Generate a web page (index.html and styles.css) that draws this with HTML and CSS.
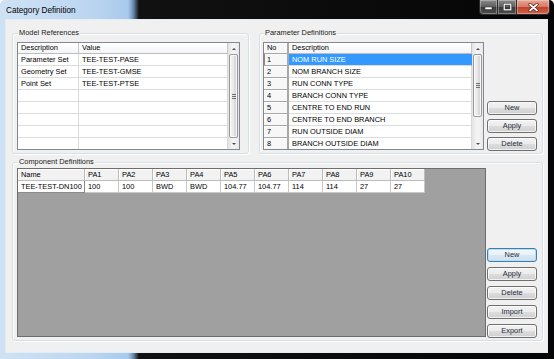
FILE: index.html
```html
<!DOCTYPE html>
<html lang="en">
<head>
    <meta charset="UTF-8">
    <title>Category Definition</title>
    <link rel="stylesheet" href="styles.css">
</head>
<body>
<div class="window">
    <div class="titlebar">
        <span class="title">Category Definition</span>
        <div class="caption-buttons">
            <span class="cb min"><svg width="9" height="6" viewBox="0 0 9 6"><rect x="1" y="3" width="7" height="2.5" fill="#fff" stroke="#333" stroke-width="0.6"/></svg></span>
            <span class="cb max"><svg width="9" height="8" viewBox="0 0 9 8"><rect x="1.2" y="1.2" width="6.6" height="5.6" fill="none" stroke="#333" stroke-width="2.2"/><rect x="1.2" y="1.2" width="6.6" height="5.6" fill="none" stroke="#fff" stroke-width="1.2"/></svg></span>
            <span class="cb close"><svg width="11" height="9" viewBox="0 0 11 9"><path d="M2 1.5 L9 7.5 M9 1.5 L2 7.5" stroke="#5a1a10" stroke-width="3.2" stroke-linecap="round"/><path d="M2 1.5 L9 7.5 M9 1.5 L2 7.5" stroke="#fff" stroke-width="1.8" stroke-linecap="round"/></svg></span>
        </div>
    </div>

    <div class="client">
        <div class="top-row">
            <!-- 模型引用 -->
            <div class="group model">
                <div class="group-label">Model References</div>
                <div class="grid">
                    <table>
                        <colgroup><col class="c-mdesc"><col></colgroup>
                        <thead>
                            <tr><th>Description</th><th>Value</th></tr>
                        </thead>
                        <tbody>
                            <tr><td>Parameter Set</td><td>TEE-TEST-PASE</td></tr>
                            <tr><td>Geometry Set</td><td>TEE-TEST-GMSE</td></tr>
                            <tr><td>Point Set</td><td>TEE-TEST-PTSE</td></tr>
                            <tr><td>&nbsp;</td><td>&nbsp;</td></tr>
                            <tr><td>&nbsp;</td><td>&nbsp;</td></tr>
                            <tr><td>&nbsp;</td><td>&nbsp;</td></tr>
                            <tr><td>&nbsp;</td><td>&nbsp;</td></tr>
                            <tr><td>&nbsp;</td><td>&nbsp;</td></tr>
                        </tbody>
                    </table>
                    <div class="vscroll">
                        <div class="arrow"><span class="tri up"></span></div>
                        <div class="track"><div class="thumb full"><span class="grip"></span></div></div>
                        <div class="arrow"><span class="tri down"></span></div>
                    </div>
                </div>
            </div>

            <!-- 参数定义 -->
            <div class="group params">
                <div class="group-label">Parameter Definitions</div>
                <div class="group-body">
                    <div class="grid">
                        <table>
                            <colgroup><col class="c-no"><col></colgroup>
                            <thead>
                                <tr><th class="no">No</th><th>Description</th></tr>
                            </thead>
                            <tbody>
                                <tr><td class="no current">1</td><td class="selected">NOM RUN SIZE</td></tr>
                                <tr><td class="no">2</td><td>NOM BRANCH SIZE</td></tr>
                                <tr><td class="no">3</td><td>RUN CONN TYPE</td></tr>
                                <tr><td class="no">4</td><td>BRANCH CONN TYPE</td></tr>
                                <tr><td class="no">5</td><td>CENTRE TO END RUN</td></tr>
                                <tr><td class="no">6</td><td>CENTRE TO END BRANCH</td></tr>
                                <tr><td class="no">7</td><td>RUN OUTSIDE DIAM</td></tr>
                                <tr><td class="no">8</td><td>BRANCH OUTSIDE DIAM</td></tr>
                            </tbody>
                        </table>
                        <div class="vscroll">
                            <div class="arrow"><span class="tri up"></span></div>
                            <div class="track"><div class="thumb part"><span class="grip"></span></div></div>
                            <div class="arrow"><span class="tri down"></span></div>
                        </div>
                    </div>
                    <div class="buttons">
                        <button class="btn">New</button>
                        <button class="btn">Apply</button>
                        <button class="btn">Delete</button>
                    </div>
                </div>
            </div>
        </div>

        <!-- 组件定义 -->
        <div class="group components">
            <div class="group-label">Component Definitions</div>
            <div class="group-body">
                <div class="grid workspace">
                    <table class="comp">
                        <colgroup><col class="c-name"><col class="c-pa"><col class="c-pa"><col class="c-pa"><col class="c-pa"><col class="c-pa"><col class="c-pa"><col class="c-pa"><col class="c-pa"><col class="c-pa"><col class="c-pa"></colgroup>
                        <thead>
                            <tr><th>Name</th><th>PA1</th><th>PA2</th><th>PA3</th><th>PA4</th><th>PA5</th><th>PA6</th><th>PA7</th><th>PA8</th><th>PA9</th><th>PA10</th></tr>
                        </thead>
                        <tbody>
                            <tr><td class="focus">TEE-TEST-DN100</td><td>100</td><td>100</td><td>BWD</td><td>BWD</td><td>104.77</td><td>104.77</td><td>114</td><td>114</td><td>27</td><td>27</td></tr>
                        </tbody>
                    </table>
                </div>
                <div class="buttons wide">
                    <button class="btn default">New</button>
                    <button class="btn">Apply</button>
                    <button class="btn">Delete</button>
                    <button class="btn">Import</button>
                    <button class="btn">Export</button>
                </div>
            </div>
        </div>
    </div>
</div>
</body>
</html>
```

FILE: styles.css
```css
/* 全局 */
body {
    margin: 0;
    font-family: "Liberation Sans", Arial, sans-serif;
    font-size: 7.4px;
    color: #000;
}

/* 窗口外框 (Aero) */
.window {
    width: 554px;
    height: 359px;
    box-sizing: border-box;
    padding: 0 6px 6px 5px;
    display: flex;
    flex-direction: column;
    background: linear-gradient(to right, #cfe2f5 0, #bcd6f0 90px, #a8caed 128px, #6d8fb3 133px, #111 139px, #050505 100%);
    border-radius: 5px 5px 0 0;
}

.titlebar {
    height: 19px;
    flex: none;
    display: flex;
    justify-content: space-between;
    align-items: flex-start;
}
.title {
    font-size: 8.2px;
    line-height: 9px;
    margin: 6px 0 0 1px;
    color: #000;
}

/* 标题栏按钮 */
.caption-buttons {
    display: flex;
    margin-right: -2px;
}
.cb {
    height: 15px;
    box-sizing: border-box;
    border: 1px solid #2a2a2a;
    border-top: none;
    border-left: none;
    display: flex;
    align-items: center;
    justify-content: center;
    box-shadow: inset 0 0 0 1px rgba(255,255,255,0.3);
}
.cb.min {
    width: 19px;
    border-left: 1px solid #2a2a2a;
    border-radius: 0 0 0 4px;
    background: linear-gradient(#8a8a8a, #5c5c5c 50%, #3a3a3a 50%, #4d4d4d);
}
.cb.max {
    width: 19px;
    background: linear-gradient(#8a8a8a, #5c5c5c 50%, #3a3a3a 50%, #4d4d4d);
}
.cb.close {
    width: 33px;
    border-radius: 0 0 4px 0;
    background: linear-gradient(#e8a493, #d47a66 50%, #c1402a 50%, #d0644c);
}

/* 客户区 */
.client {
    flex: 1;
    background: #f0f0f0;
    border: 1px solid #e4ecf4;
    display: flex;
    flex-direction: column;
}

.top-row {
    display: flex;
    gap: 10px;
    padding: 13px 4px 0 6px;
}

/* 分组框 */
.group {
    border: 1px solid #d5dfe5;
    border-radius: 3px;
    box-shadow: inset 1px 1px #fff, 1px 1px #fff;
    padding: 0 4px 3px 4px;
    display: flex;
    flex-direction: column;
}
.group-label {
    align-self: flex-start;
    margin: -6px 0 0 1px;
    padding: 0 1px;
    line-height: 10px;
    background: #f0f0f0;
    color: #1a1a1a;
}
.group.model {
    width: 237px;
    box-sizing: border-box;
    padding-right: 8px;
}
.group.model .grid {
    margin-top: 4px;
}
.group.params {
    flex: 1;
    padding-left: 3px;
}
.group-body {
    display: flex;
    margin-top: 4px;
    flex: 1;
}
.group-body .grid {
    flex: 1;
}

.group.components {
    flex: 1;
    margin: 8px 4px 11px 6px;
}
.group.components .group-body {
    margin-top: 1px;
}

/* 按钮列 */
.buttons {
    width: 50px;
    margin: 0 1px 0 3px;
    display: flex;
    flex-direction: column;
    justify-content: flex-end;
    gap: 4px;
    margin-bottom: -1px;
}
.buttons.wide {
    gap: 5px;
    margin: 0 1px -1px 1px;
}
.btn {
    height: 14px;
    box-sizing: border-box;
    padding: 0;
    border: 1px solid #707070;
    border-radius: 3px;
    background: linear-gradient(#f2f2f2 0, #ebebeb 50%, #dddddd 50%, #cfcfcf 100%);
    box-shadow: inset 0 0 0 1px rgba(255,255,255,0.7);
    font-family: inherit;
    font-size: 7.4px;
    line-height: 12px;
    color: #1b2a3a;
}
.btn.default {
    border-color: #3c7fb1;
    background: linear-gradient(#f3f8fc 0, #e8f1f8 50%, #dbe7f1 50%, #d2e1ee 100%);
    box-shadow: inset 0 0 0 1px #b9dcf5;
}

/* 表格 */
.grid {
    height: 108px;
    box-sizing: border-box;
    border: 1px solid #828790;
    background: #fff;
    display: flex;
    overflow: hidden;
}
.grid table {
    flex: 1;
    align-self: flex-start;
    table-layout: fixed;
    border-collapse: separate;
    border-spacing: 0;
}
.grid th,
.grid td {
    box-sizing: border-box;
    padding: 0 0 0 3px;
    line-height: 11px;
    text-align: left;
    font-weight: normal;
    white-space: nowrap;
    overflow: hidden;
    border-right: 1px solid #d9d9d9;
    border-bottom: 1px solid #dcdcdc;
}
.grid th {
    line-height: 10px;
    background: linear-gradient(#fff, #f4f5f7);
    border-right: 1px solid #c9c9c9;
    border-bottom: 1px solid #bdbdbd;
}
.c-mdesc { width: 61px; }
.c-no { width: 25px; }
.c-name { width: 67px; }
.c-pa { width: 34px; }

.grid th.no,
.grid td.no {
    background: #f7f7f7;
    border-right: 2px solid #a8a8a8;
    border-bottom: 1px solid #a8a8a8;
    box-shadow: inset 1px 1px #fff;
}
.grid td.no.current {
    box-shadow: inset 1px 0 #888;
}
.grid td.selected {
    background: #3399ff;
    color: #fff;
    border-right-color: #3399ff;
}

/* 灰色工作区 */
.grid.workspace {
    height: auto;
    flex: 1;
    background: #a0a0a0;
    border-color: #6d6d6d;
}
.grid table.comp {
    flex: none;
}
.comp th {
    line-height: 11px;
    background: #f2f2f2;
    border-right: 1px solid #bcbcbc;
    border-bottom: 1px solid #bcbcbc;
    box-shadow: inset 1px 1px #fff;
}
.comp td {
    background: #fff;
    border-right: 1px solid #c8c8c8;
    border-bottom: 1px solid #c8c8c8;
}
.comp td.focus {
    border-right: 1px solid #8a8a8a;
    border-bottom: 1px solid #8a8a8a;
}

/* 滚动条 */
.vscroll {
    width: 11px;
    flex: none;
    display: flex;
    flex-direction: column;
    background: linear-gradient(to right, #e3e3e3, #f3f3f3 40%, #f3f3f3 60%, #e8e8e8);
}
.arrow {
    height: 11px;
    flex: none;
    display: flex;
    align-items: center;
    justify-content: center;
}
.tri {
    width: 0;
    height: 0;
    border-left: 2px solid transparent;
    border-right: 2px solid transparent;
}
.tri.up { border-bottom: 2px solid #4d4d4d; }
.tri.down { border-top: 2px solid #4d4d4d; }
.track {
    flex: 1;
    display: flex;
    flex-direction: column;
    padding: 0 1px;
}
.thumb {
    box-sizing: border-box;
    border: 1px solid #989898;
    border-radius: 2px;
    background: linear-gradient(to right, #f3f3f3, #e9e9e9 50%, #dcdcdc 51%, #d6d6d6);
    box-shadow: inset 0 0 0 1px rgba(255,255,255,0.8);
    display: flex;
    align-items: center;
    justify-content: center;
}
.thumb.full { flex: 1; }
.thumb.part { height: 63px; }
.grip {
    width: 4px;
    height: 5px;
    background: repeating-linear-gradient(#6f6f6f 0 1px, transparent 1px 2px);
}
```
